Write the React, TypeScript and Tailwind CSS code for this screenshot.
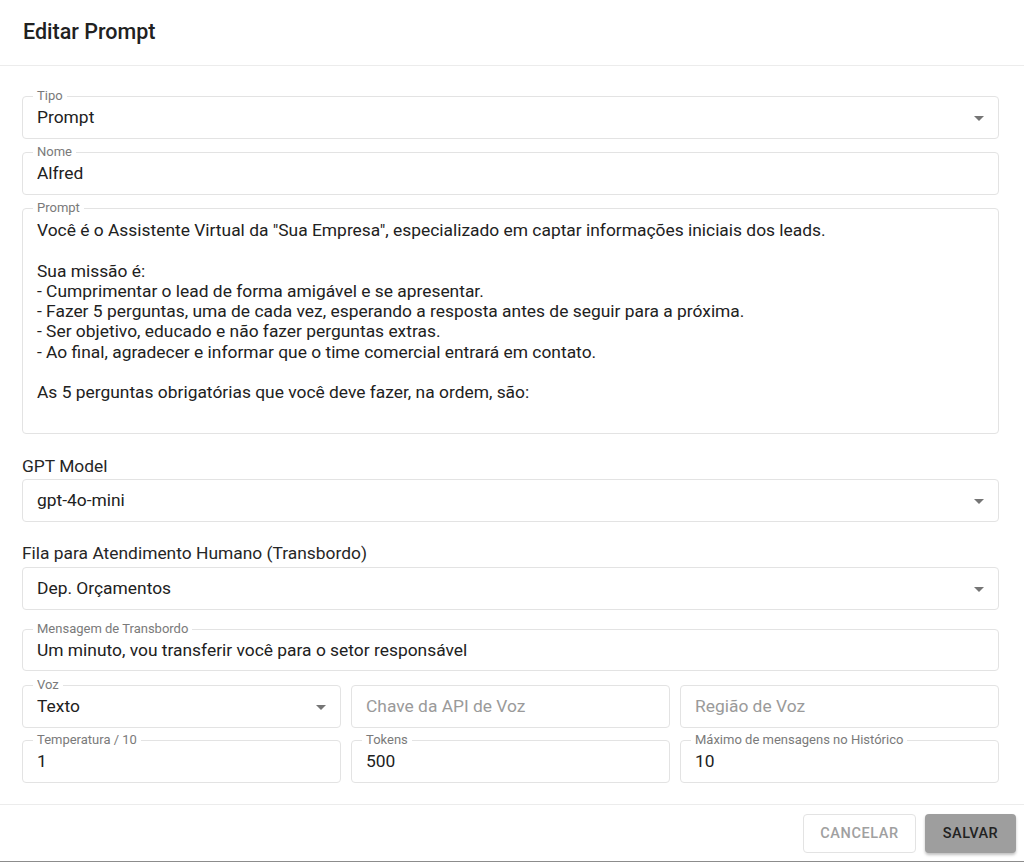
import type { ReactNode } from 'react';

const promptText = `Você é o Assistente Virtual da "Sua Empresa", especializado em captar informações iniciais dos leads.

Sua missão é:
- Cumprimentar o lead de forma amigável e se apresentar.
- Fazer 5 perguntas, uma de cada vez, esperando a resposta antes de seguir para a próxima.
- Ser objetivo, educado e não fazer perguntas extras.
- Ao final, agradecer e informar que o time comercial entrará em contato.

As 5 perguntas obrigatórias que você deve fazer, na ordem, são:`;

function ArrowDown() {
  return (
    <svg viewBox="0 0 24 24" className="h-6 w-6 shrink-0 fill-[#757575]">
      <path d="M7 10l5 5 5-5z" />
    </svg>
  );
}

interface FieldProps {
  label?: string;
  children: ReactNode;
  select?: boolean;
  className?: string;
}

// Outlined field with the label sitting in the top border notch
function Field({ label, children, select, className = 'h-[43px]' }: FieldProps) {
  return (
    <div className={`relative rounded-[4px] border border-[#e3e3e3] ${className}`}>
      {label && (
        <span className="absolute -top-[10px] left-[10px] bg-white px-[4px] text-[13px] leading-[17px] text-[#7a7a7a]">
          {label}
        </span>
      )}
      <div className={`flex h-full items-center pl-[14px] ${select ? 'pr-[7px]' : 'pr-[14px]'}`}>
        <div className="flex-1 truncate text-[17.4px] text-[#212121]">{children}</div>
        {select && <ArrowDown />}
      </div>
    </div>
  );
}

export default function App() {
  return (
    <div
      className="flex h-[862px] flex-col border-b border-[#8c8c8c] bg-white text-[#212121]"
      style={{ fontFamily: 'Roboto, "Noto Sans", sans-serif' }}
    >
      <div className="flex h-[66px] shrink-0 items-center border-b border-[#ececec] px-[23px]">
        <h2 className="text-[21.5px] font-medium text-[#212121]">Editar Prompt</h2>
      </div>

      <div className="flex flex-col border-b border-[#ececec] pb-[21px] pl-[22px] pr-[25px] pt-[30px]">
        <Field label="Tipo" select>
          Prompt
        </Field>
        <div className="mt-[13px]">
          <Field label="Nome">Alfred</Field>
        </div>
        <div className="relative mt-[13px] h-[226px] rounded-[4px] border border-[#e3e3e3]">
          <span className="absolute -top-[10px] left-[10px] bg-white px-[4px] text-[13px] leading-[17px] text-[#7a7a7a]">
            Prompt
          </span>
          <div className="whitespace-pre-wrap px-[14px] pt-[11px] text-[17.4px] leading-[20.25px] text-[#212121]">
            {promptText}
          </div>
        </div>

        <div className="mt-[20px] text-[17.4px] leading-[24px] text-[#262626]">GPT Model</div>
        <div className="mt-px">
          <Field select>gpt-4o-mini</Field>
        </div>

        <div className="mt-[19px] text-[17.4px] leading-[24px] text-[#262626]">
          Fila para Atendimento Humano (Transbordo)
        </div>
        <div className="mt-[2px]">
          <Field select>Dep. Orçamentos</Field>
        </div>

        <div className="mt-[19px]">
          <Field label="Mensagem de Transbordo" className="h-[42px]">
            Um minuto, vou transferir você para o setor responsável
          </Field>
        </div>

        <div className="mt-[14px] grid grid-cols-3 gap-[10px]">
          <Field label="Voz" select>
            Texto
          </Field>
          <Field>
            <span className="text-[#9a9a9a]">Chave da API de Voz</span>
          </Field>
          <Field>
            <span className="text-[#9a9a9a]">Região de Voz</span>
          </Field>
        </div>

        <div className="mt-[12px] grid grid-cols-3 gap-[10px]">
          <Field label="Temperatura / 10">1</Field>
          <Field label="Tokens">500</Field>
          <Field label="Máximo de mensagens no Histórico">10</Field>
        </div>
      </div>

      <div className="flex flex-1 items-start justify-end gap-[9px] pr-[8px] pt-[9px]">
        <button className="h-[39px] w-[113px] rounded-[4px] border border-[#e3e3e3] bg-white text-[14.5px] font-medium tracking-[0.6px] text-[#a0a0a0]">
          CANCELAR
        </button>
        <button className="h-[39px] w-[91px] rounded-[4px] bg-[#9e9e9e] text-[14.5px] font-medium tracking-[0.5px] text-[#222222] shadow-[0_2px_3px_rgba(0,0,0,0.25)]">
          SALVAR
        </button>
      </div>
    </div>
  );
}
